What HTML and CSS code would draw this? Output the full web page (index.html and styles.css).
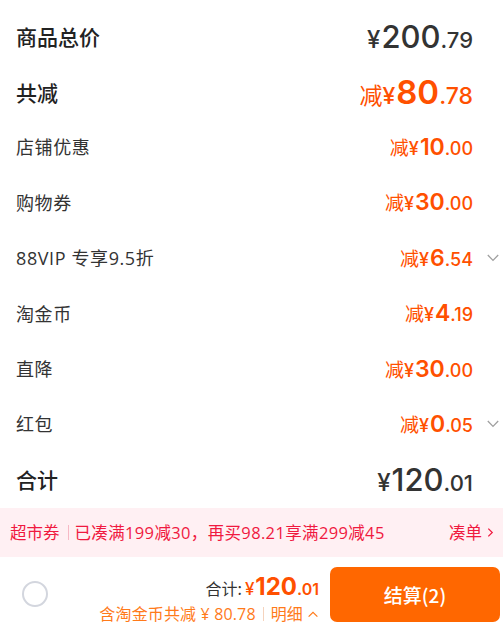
FILE: index.html
```html
<!DOCTYPE html>
<html lang="zh">
<head>
<meta charset="utf-8">
<link rel="stylesheet" href="styles.css">
</head>
<body>
<div class="page">
  <div class="list">
    <div class="row strong">
      <span class="label">商品总价</span>
      <span class="val dark big"><span class="yen">¥</span><span class="int">200</span><span class="dec">.79</span></span>
      <span class="slot"></span>
    </div>
    <div class="row strong">
      <span class="label">共减</span>
      <span class="val orange big2"><span class="jian">减</span><span class="yen">¥</span><span class="int">80</span><span class="dec">.78</span></span>
      <span class="slot"></span>
    </div>
    <div class="row">
      <span class="label">店铺优惠</span>
      <span class="val orange"><span class="jian">减</span><span class="yen">¥</span><span class="int">10</span><span class="dec">.00</span></span>
      <span class="slot"></span>
    </div>
    <div class="row">
      <span class="label">购物券</span>
      <span class="val orange"><span class="jian">减</span><span class="yen">¥</span><span class="int">30</span><span class="dec">.00</span></span>
      <span class="slot"></span>
    </div>
    <div class="row">
      <span class="label">88VIP 专享9.5折</span>
      <span class="val orange"><span class="jian">减</span><span class="yen">¥</span><span class="int">6</span><span class="dec">.54</span></span>
      <span class="slot"><svg class="chev" viewBox="0 0 12 8" width="12" height="8"><path d="M0.8 1 L6 6.4 L11.2 1" fill="none" stroke="#a0a0a0" stroke-width="1.3"/></svg></span>
    </div>
    <div class="row">
      <span class="label">淘金币</span>
      <span class="val orange"><span class="jian">减</span><span class="yen">¥</span><span class="int">4</span><span class="dec">.19</span></span>
      <span class="slot"></span>
    </div>
    <div class="row">
      <span class="label">直降</span>
      <span class="val orange"><span class="jian">减</span><span class="yen">¥</span><span class="int">30</span><span class="dec">.00</span></span>
      <span class="slot"></span>
    </div>
    <div class="row">
      <span class="label">红包</span>
      <span class="val orange"><span class="jian">减</span><span class="yen">¥</span><span class="int">0</span><span class="dec">.05</span></span>
      <span class="slot"><svg class="chev" viewBox="0 0 12 8" width="12" height="8"><path d="M0.8 1 L6 6.4 L11.2 1" fill="none" stroke="#a0a0a0" stroke-width="1.3"/></svg></span>
    </div>
    <div class="row strong">
      <span class="label">合计</span>
      <span class="val dark big"><span class="yen">¥</span><span class="int">120</span><span class="dec">.01</span></span>
      <span class="slot"></span>
    </div>
  </div>

  <div class="banner">
    <span class="tag">超市券</span>
    <span class="sep"></span>
    <span class="msg">已凑满199减30，再买98.21享满299减45</span>
    <span class="go">凑单<svg viewBox="0 0 8 12" width="7" height="11"><path d="M1.5 1.5 L6 6 L1.5 10.5" fill="none" stroke="#f0193f" stroke-width="1.4"/></svg></span>
  </div>

  <div class="bar">
    <span class="radio"></span>
    <div class="sum">
      <div class="sum-line1"><span class="sum-label">合计:</span><span class="sum-price"><span class="yen">¥</span><span class="int">120</span><span class="dec">.01</span></span></div>
      <div class="sum-line2"><span>含淘金币共减 ¥ 80.78</span><span class="sep2"></span><span>明细</span><svg viewBox="0 0 12 8" width="12" height="7"><path d="M1 6.5 L6 1.5 L11 6.5" fill="none" stroke="#ff7a1a" stroke-width="1.4"/></svg></div>
    </div>
    <button class="pay">结算(2)</button>
  </div>
</div>
</body>
</html>
```

FILE: styles.css
```css
html, body {
  margin: 0;
  padding: 0;
  background: #ffffff;
}
body {
  font-family: "Noto Sans CJK SC", "Noto Sans", sans-serif;
  color: #333333;
}
.page {
  width: 503px;
  height: 630px;
  display: flex;
  flex-direction: column;
  overflow: hidden;
}
.list {
  padding-top: 9px;
  display: flex;
  flex-direction: column;
}
.row {
  height: 55.4px;
  display: flex;
  align-items: center;
  padding-left: 16px;
}
.label {
  flex: 1;
  font-family: "Open Sans", "Noto Sans CJK SC", sans-serif;
  font-size: 18px;
  letter-spacing: 0.6px;
  color: #333;
  line-height: 1;
}
.row.strong .label {
  font-family: "Noto Sans CJK SC", sans-serif;
  font-size: 21px;
  font-weight: 500;
  letter-spacing: 0;
  color: #222;
}
.val {
  display: flex;
  align-items: baseline;
  font-family: Inter, "Noto Sans CJK SC", sans-serif;
  line-height: 1;
}
.slot {
  width: 30px;
  display: flex;
  align-items: center;
  padding-left: 14px;
  box-sizing: border-box;
}
.chev {
  display: block;
}
.orange { color: #ff5000; }
.dark { color: #333; }
.val .jian {
  font-family: "Noto Sans CJK SC", sans-serif;
  font-size: 19px;
}
.val .yen {
  font-size: 18px;
  font-weight: 500;
  margin-right: 1px;
}
.val .int {
  font-size: 23px;
  font-weight: 600;
}
.val .dec {
  font-size: 18px;
  font-weight: 500;
}
.val.big .yen { font-size: 24px; font-weight: 500; }
.val.big .int { font-size: 31px; font-weight: 500; }
.val.big .dec { font-size: 22px; }
.val.big2 .jian { font-size: 23px; }
.val.big2 .yen { font-size: 23px; }
.val.big2 .int { font-size: 33px; font-weight: 600; }
.val.big2 .dec { font-size: 23px; }

.banner {
  height: 49px;
  background: #fff0f3;
  display: flex;
  align-items: center;
  padding: 0 9px 0 10px;
  color: #f0193f;
  font-family: "Open Sans", "Noto Sans CJK SC", sans-serif;
  font-size: 16.5px;
}
.banner .sep {
  width: 1px;
  height: 15px;
  background: #f7b9c5;
  margin: 0 6px 0 8px;
}
.banner .msg {
  flex: 1;
  letter-spacing: 0.35px;
}
.banner .go {
  display: flex;
  align-items: center;
  gap: 5px;
}
.bar {
  flex: 1;
  display: flex;
  align-items: center;
  padding: 2px 3px 0 22px;
}
.radio {
  width: 22px;
  height: 22px;
  border: 2px solid #d3d6de;
  border-radius: 50%;
}
.sum {
  flex: 1;
  display: flex;
  flex-direction: column;
  align-items: flex-end;
  padding-right: 11px;
  padding-top: 10px;
}
.sum-line1 {
  display: flex;
  align-items: baseline;
  line-height: 1;
}
.sum-label {
  font-size: 16px;
  color: #333;
  margin-right: 3px;
}
.sum-price {
  color: #ff5000;
  font-family: Inter, "Noto Sans CJK SC", sans-serif;
  display: flex;
  align-items: baseline;
}
.sum-price .yen { font-size: 17px; font-weight: 500; margin-right: 1px; }
.sum-price .int { font-size: 24px; font-weight: 700; }
.sum-price .dec { font-size: 16px; font-weight: 600; }
.sum-line2 {
  margin-top: 6px;
  display: flex;
  align-items: center;
  color: #ff7a1a;
  font-family: "Open Sans", "Noto Sans CJK SC", sans-serif;
  font-size: 16px;
  letter-spacing: 0.15px;
  line-height: 19px;
}
.sum-line2 .sep2 {
  width: 1px;
  height: 14px;
  background: #f5d3bd;
  margin: 0 7px;
}
.sum-line2 svg {
  margin-left: 4px;
}
.pay {
  width: 170px;
  height: 55px;
  border: none;
  border-radius: 7px;
  background: #ff6700;
  color: #fff;
  font-family: "Noto Sans CJK SC", sans-serif;
  font-size: 19px;
  font-weight: 500;
}
```
